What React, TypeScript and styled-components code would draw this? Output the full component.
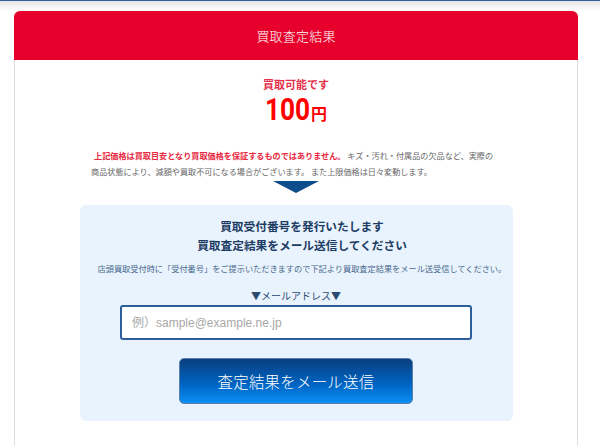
import React from "react";
import styled, { createGlobalStyle } from "styled-components";

const Global = createGlobalStyle`
  html, body { margin: 0; padding: 0; background: #ffffff; }
  body { font-family: "Noto Sans CJK JP", "Noto Sans", sans-serif; }
  * { box-sizing: border-box; }
`;

const TopEdge = styled.div`
  height: 1px;
  background: #2f6098;
`;

const TopShade = styled.div`
  height: 10px;
  background: linear-gradient(#e6e6e6, #ffffff);
`;

const Card = styled.section`
  margin-left: 14px;
  width: 564px;
  border: 1px solid #dedede;
  border-top: none;
  border-radius: 6px 6px 0 0;
  background: #fff;
  padding-bottom: 40px;
`;

const CardHeader = styled.header`
  height: 49px;
  margin: 0 -1px;
  background: #e6002b;
  border-radius: 6px 6px 0 0;
  display: flex;
  align-items: center;
  justify-content: center;
  color: #fff;
  font-size: 13px;
  font-weight: 300;
  letter-spacing: 0.2px;
`;

const Result = styled.div`
  padding-top: 16px;
  display: flex;
  flex-direction: column;
  align-items: center;
`;

const Possible = styled.div`
  font-size: 11px;
  line-height: 16px;
  font-weight: 700;
  color: #e4314b;
`;

const Price = styled.div`
  margin-top: 1px;
  display: flex;
  align-items: baseline;
  justify-content: center;
  color: #ff0000;
  line-height: 1;
`;

const Amount = styled.span`
  display: inline-block;
  font-family: Roboto, "Liberation Sans", sans-serif;
  font-weight: 700;
  font-size: 32px;
  transform: scaleX(0.82);
  transform-origin: right center;
  margin-left: -10px;
`;

const Yen = styled.span`
  font-size: 16px;
  font-weight: 700;
  margin-left: 1px;
`;

const Notice = styled.p`
  margin: 23px 0 0;
  width: 410px;
  font-size: 8.15px;
  line-height: 15.5px;
  color: #666;
  text-indent: 3px;
  white-space: nowrap;
`;

const Strong = styled.span`
  color: #e8283f;
  font-weight: 700;
`;

const Arrow = styled.div`
  margin-top: 2px;
  width: 0;
  height: 0;
  border-left: 23px solid transparent;
  border-right: 23px solid transparent;
  border-top: 12px solid #0d4c8d;
`;

const MailBox = styled.div`
  margin: 12px auto 0;
  width: 433px;
  background: #e9f3fd;
  border-radius: 6px;
  padding: 11px 0 17px;
  display: flex;
  flex-direction: column;
  align-items: center;
`;

const Heading = styled.h2`
  margin: 0;
  padding-left: 12px;
  font-size: 11.7px;
  line-height: 19px;
  font-weight: 700;
  color: #1c3c64;
  text-align: center;
`;

const Guide = styled.p`
  margin: 8px 0 0;
  align-self: flex-start;
  padding-left: 18px;
  font-size: 8.2px;
  line-height: 12px;
  color: #48698c;
  white-space: nowrap;
`;

const FieldLabel = styled.div`
  margin-top: 15px;
  font-size: 10px;
  line-height: 14px;
  color: #2a4a70;
`;

const EmailInput = styled.input`
  margin-top: 2px;
  width: 352px;
  height: 35px;
  border: 2px solid #2d5f9a;
  border-radius: 3px;
  background: #fff;
  padding: 0 10px;
  font-family: "Liberation Sans", "Noto Sans CJK JP", sans-serif;
  font-size: 12px;
  color: #333;
  outline: none;
  &::placeholder { color: #a8a8a8; }
`;

const SendButton = styled.button`
  margin-top: 18px;
  width: 234px;
  height: 46px;
  border: 1px solid #5a7fa8;
  border-radius: 5px;
  background: linear-gradient(#0a3f80, #0062c0 55%, #0a8ef5);
  color: #fff;
  font-family: "Noto Sans CJK JP", sans-serif;
  font-size: 15.4px;
  font-weight: 300;
  letter-spacing: 0.3px;
  cursor: pointer;
  display: flex;
  align-items: center;
  justify-content: center;
`;

export default function App() {
  return (
    <>
      <Global />
      <TopEdge />
      <TopShade />
      <Card>
        <CardHeader>買取査定結果</CardHeader>
        <Result>
          <Possible>買取可能です</Possible>
          <Price>
            <Amount>100</Amount>
            <Yen>円</Yen>
          </Price>
          <Notice>
            <Strong>上記価格は買取目安となり買取価格を保証するものではありません。</Strong>{" "}
            キズ・汚れ・付属品の欠品など、実際の
            <br />
            商品状態により、減額や買取不可になる場合がございます。 また上限価格は日々変動します。
          </Notice>
          <Arrow />
        </Result>
        <MailBox>
          <Heading>
            買取受付番号を発行いたします
            <br />
            買取査定結果をメール送信してください
          </Heading>
          <Guide>店頭買取受付時に「受付番号」をご提示いただきますので下記より買取査定結果をメール送受信してください。</Guide>
          <FieldLabel>▼メールアドレス▼</FieldLabel>
          <EmailInput type="email" placeholder="例）sample@example.ne.jp" />
          <SendButton type="button">査定結果をメール送信</SendButton>
        </MailBox>
      </Card>
    </>
  );
}
